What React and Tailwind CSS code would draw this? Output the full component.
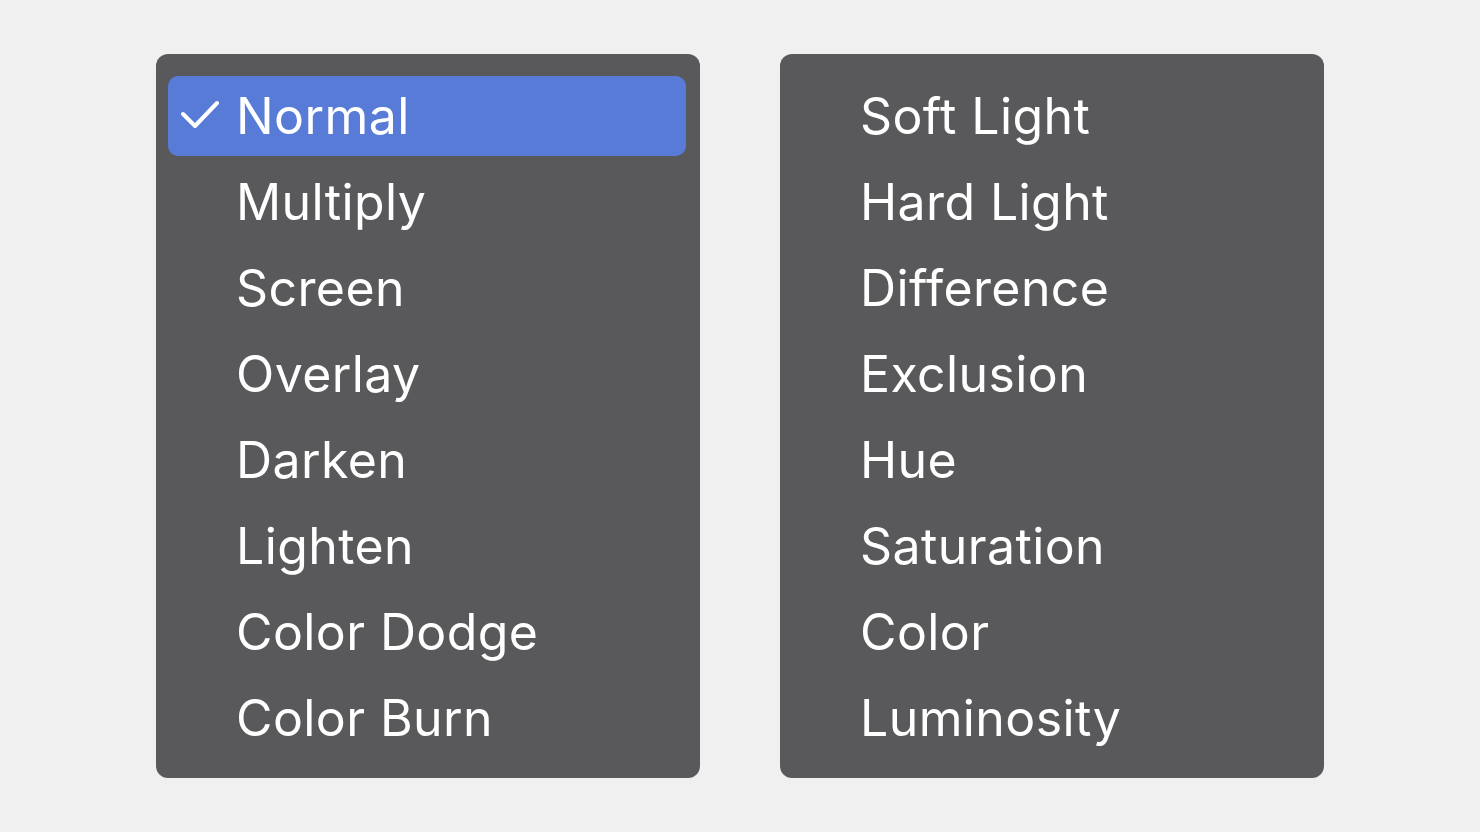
import React from "react";

const left = ["Normal", "Multiply", "Screen", "Overlay", "Darken", "Lighten", "Color Dodge", "Color Burn"];
const right = ["Soft Light", "Hard Light", "Difference", "Exclusion", "Hue", "Saturation", "Color", "Luminosity"];

function Check() {
  return (
    <svg width="40" height="32" viewBox="0 0 40 32" fill="none" className="shrink-0">
      <path d="M2 14 L14 26 L36 3" stroke="white" strokeWidth="4" strokeLinecap="round" strokeLinejoin="round" />
    </svg>
  );
}

function Menu({ items, selected }) {
  return (
    <div className="w-[544px] rounded-[12px] bg-[#59595b] pt-[22px] pb-[20px] pl-[12px] pr-[14px] flex flex-col gap-[6px]">
      {items.map((item) => {
        const active = item === selected;
        return (
          <div
            key={item}
            className={
              "h-[80px] rounded-[10px] flex items-center " +
              (active ? "bg-[#587bd8]" : "")
            }
          >
            <div className="w-[68px] flex pl-[13px]">{active && <Check />}</div>
            <span className="text-white text-[50px] leading-none tracking-[0.4px]">{item}</span>
          </div>
        );
      })}
    </div>
  );
}

export default function App() {
  return (
    <div
      className="w-[1480px] h-[832px] bg-[#f0f0f0] flex items-start justify-center gap-[80px] pt-[54px]"
      style={{ fontFamily: "Inter, 'Noto Sans', sans-serif" }}
    >
      <Menu items={left} selected="Normal" />
      <Menu items={right} selected={null} />
    </div>
  );
}
